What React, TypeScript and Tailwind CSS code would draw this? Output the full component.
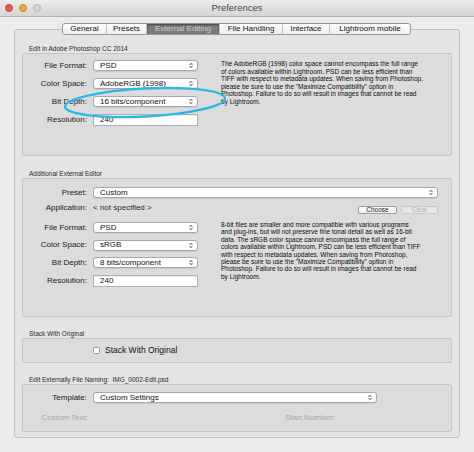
import React from "react"

const sans = "font-['Liberation_Sans',Arial,sans-serif]"

function Arrows() {
  return (
    <svg width="4" height="7" viewBox="0 0 4 7" className="shrink-0">
      <path d="M0.6 2.9 L2 1.3 L3.4 2.9 M0.6 4.1 L2 5.7 L3.4 4.1" fill="none" stroke="#3a3a3a" strokeWidth="0.9" />
    </svg>
  )
}

function Select({ value, className = "" }: { value: string; className?: string }) {
  return (
    <div
      className={`flex h-[11px] items-center justify-between rounded-[3px] border border-[#a9a9a9] bg-white pl-[6px] pr-[4px] text-[8px] leading-none text-[#111] shadow-[0_0.5px_0.5px_rgba(0,0,0,0.15)] ${className}`}
    >
      <span>{value}</span>
      <Arrows />
    </div>
  )
}

function Field({ value }: { value: string }) {
  return (
    <div className="flex h-[12px] w-[105px] items-center border border-[#b0b0b0] bg-white pl-[6px] text-[8px] leading-none text-[#111] shadow-[inset_0_0.5px_0.5px_rgba(0,0,0,0.15)]">
      {value}
    </div>
  )
}

function Row({ label, children, className = "" }: { label: string; children: React.ReactNode; className?: string }) {
  return (
    <div className={`flex items-center ${className}`}>
      <div className="w-[67px] pr-[3px] text-right text-[8px] leading-none text-[#1a1a1a]">{label}</div>
      <div className="ml-[3px]">{children}</div>
    </div>
  )
}

function SectionLabel({ children, className = "" }: { children: React.ReactNode; className?: string }) {
  return <div className={`h-[9px] pl-[7px] text-[6.5px] leading-[9px] text-[#2a2a2a] ${className}`}>{children}</div>
}

const boxClass = "rounded-[2px] border border-[#c6c6c6] bg-[#dcdcdc]"

const tabs = [
  { name: "General", w: "w-[43px]" },
  { name: "Presets", w: "w-[40px]" },
  { name: "External Editing", w: "w-[73px]", active: true },
  { name: "File Handling", w: "w-[63px]" },
  { name: "Interface", w: "w-[47px]" },
  { name: "Lightroom mobile", w: "w-[81px]" },
]

export default function App() {
  return (
    <div className={`relative h-[452px] w-[474px] overflow-hidden bg-[#ececec] ${sans}`}>
      {/* title bar */}
      <div className="grid h-[17px] grid-cols-[1fr_auto_1fr] items-center border-b border-[#b4b4b4] bg-linear-to-b from-[#ececec] to-[#d5d5d5]">
        <div className="flex items-center gap-[6px] pl-[5px]">
          <div className="h-[8px] w-[8px] rounded-full border border-[#c4423b] bg-[#ea5a52]" />
          <div className="h-[8px] w-[8px] rounded-full border border-[#c48d27] bg-[#e2ad3f]" />
          <div className="h-[8px] w-[8px] rounded-full border border-[#b8b8b8] bg-[#d3d3d3]" />
        </div>
        <div className="text-[9.5px] leading-none text-[#4a4a4a]">Preferences</div>
        <div />
      </div>

      {/* tabs */}
      <div className="relative z-10 ml-[62px] mt-[6px] flex h-[12px] w-fit overflow-hidden rounded-[3px] border border-[#9a9a9a] bg-linear-to-b from-white to-[#ededed]">
        {tabs.map((t, i) => (
          <div
            key={t.name}
            className={`flex h-full items-center justify-center text-[8px] leading-none ${t.w} ${
              i > 0 ? "border-l border-[#c4c4c4]" : ""
            } ${t.active ? "bg-[#7b7b7b] text-[#cdcdcd] shadow-[inset_0_1px_2px_rgba(0,0,0,0.45)]" : "text-[#111]"}`}
          >
            {t.name}
          </div>
        ))}
      </div>

      {/* panel */}
      <div className="mx-[14px] -mt-[6px] h-[409px] rounded-[3px] border border-[#c2c2c2] bg-[#e4e4e4] px-[7px] pt-[14px]">
        <SectionLabel>Edit in Adobe Photoshop CC 2014</SectionLabel>
        <div className={`${boxClass} flex h-[103px] pt-[6px]`}>
          <div className="flex w-[175px] flex-col gap-[7px]">
            <Row label="File Format:">
              <Select value="PSD" className="w-[105px]" />
            </Row>
            <Row label="Color Space:">
              <Select value="AdobeRGB (1998)" className="w-[105px]" />
            </Row>
            <Row label="Bit Depth:">
              <Select value="16 bits/component" className="w-[105px]" />
            </Row>
            <Row label="Resolution:">
              <Field value="240" />
            </Row>
          </div>
          <div className="ml-[23px] whitespace-nowrap text-[6.5px] leading-[7.6px] text-[#0d0d0d]">
            The AdobeRGB (1998) color space cannot encompass the full range
            <br />
            of colors available within Lightroom. PSD can be less efficient than
            <br />
            TIFF with respect to metadata updates. When saving from Photoshop,
            <br />
            please be sure to use the "Maximize Compatibility" option in
            <br />
            Photoshop. Failure to do so will result in images that cannot be read
            <br />
            by Lightroom.
          </div>
        </div>

        <SectionLabel className="mt-[13px]">Additional External Editor</SectionLabel>
        <div className={`${boxClass} h-[139px] pt-[8px]`}>
          <Row label="Preset:">
            <Select value="Custom" className="w-[345px]" />
          </Row>
          <div className="mt-[4px] flex h-[12px] items-start">
            <div className="w-[67px] pr-[3px] text-right text-[8px] leading-[12px] text-[#1a1a1a]">Application:</div>
            <div className="ml-[3px] text-[8px] leading-[12px] text-[#2a2a2a]">&lt; not specified &gt;</div>
            <div className="ml-auto mr-[13px] mt-[4px] flex gap-[4px]">
              <div className="flex h-[8px] w-[39px] items-center justify-center rounded-[2px] border border-[#9c9c9c] bg-linear-to-b from-white to-[#f0f0f0] text-[6.5px] leading-none text-[#1a1a1a]">
                Choose
              </div>
              <div className="flex h-[8px] w-[37px] items-center justify-center rounded-[2px] border border-[#cacaca] bg-[#e6e6e6] text-[6.5px] leading-none text-[#b3b3b3]">
                Clear
              </div>
            </div>
          </div>
          <div className="mt-[8px] flex">
            <div className="flex w-[175px] flex-col gap-[6.7px]">
              <Row label="File Format:">
                <Select value="PSD" className="w-[105px]" />
              </Row>
              <Row label="Color Space:">
                <Select value="sRGB" className="w-[105px]" />
              </Row>
              <Row label="Bit Depth:">
                <Select value="8 bits/component" className="w-[105px]" />
              </Row>
              <Row label="Resolution:">
                <Field value="240" />
              </Row>
            </div>
            <div className="-mt-[1px] ml-[23px] whitespace-nowrap text-[6.5px] leading-[7.4px] text-[#0d0d0d]">
              8-bit files are smaller and more compatible with various programs
              <br />
              and plug-ins, but will not preserve fine tonal detail as well as 16-bit
              <br />
              data. The sRGB color space cannot encompass the full range of
              <br />
              colors available within Lightroom. PSD can be less efficient than TIFF
              <br />
              with respect to metadata updates. When saving from Photoshop,
              <br />
              please be sure to use the "Maximize Compatibility" option in
              <br />
              Photoshop. Failure to do so will result in images that cannot be read
              <br />
              by Lightroom.
            </div>
          </div>
        </div>

        <SectionLabel className="mt-[12px]">Stack With Original</SectionLabel>
        <div className={`${boxClass} flex h-[25px] items-center pl-[70px]`}>
          <div className="h-[7px] w-[7px] rounded-[1.5px] border border-[#9a9a9a] bg-white" />
          <div className="ml-[5px] text-[8.5px] leading-none text-[#111]">Stack With Original</div>
        </div>

        <SectionLabel className="mt-[12px]">
          Edit Externally File Naming:&nbsp; IMG_0002-Edit.psd
        </SectionLabel>
        <div className={`${boxClass} h-[48px] pt-[7px]`}>
          <Row label="Template:">
            <Select value="Custom Settings" className="w-[284px]" />
          </Row>
          <div className="mt-[9px] flex h-[12px] items-center">
            <div className="w-[67px] pr-[2px] text-right text-[8px] leading-none text-[#a8a8a8]">Custom Text:</div>
            <div className="ml-[195px] text-[8px] leading-none text-[#a8a8a8]">Start Number:</div>
          </div>
        </div>
      </div>

      {/* annotation */}
      <svg className="pointer-events-none absolute left-0 top-0" width="474" height="452">
        <ellipse
          cx="145"
          cy="102.5"
          rx="80"
          ry="14"
          transform="rotate(-3 145 102.5)"
          fill="none"
          stroke="#2cb8e6"
          strokeWidth="2.4"
        />
      </svg>
    </div>
  )
}
